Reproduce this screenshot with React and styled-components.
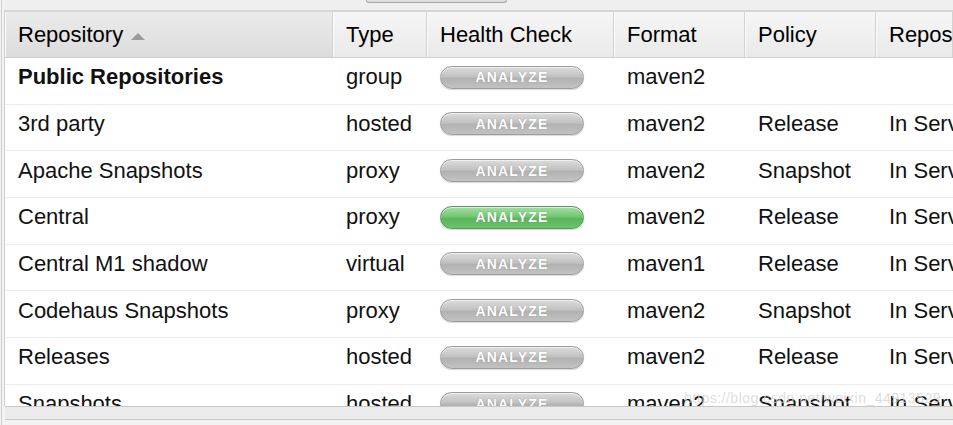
import styled, { createGlobalStyle } from 'styled-components';

const rows = [
  { name: 'Public Repositories', type: 'group', format: 'maven2', policy: '', status: '', bold: true },
  { name: '3rd party', type: 'hosted', format: 'maven2', policy: 'Release', status: 'In Service' },
  { name: 'Apache Snapshots', type: 'proxy', format: 'maven2', policy: 'Snapshot', status: 'In Service' },
  { name: 'Central', type: 'proxy', format: 'maven2', policy: 'Release', status: 'In Service', green: true },
  { name: 'Central M1 shadow', type: 'virtual', format: 'maven1', policy: 'Release', status: 'In Service' },
  { name: 'Codehaus Snapshots', type: 'proxy', format: 'maven2', policy: 'Snapshot', status: 'In Service' },
  { name: 'Releases', type: 'hosted', format: 'maven2', policy: 'Release', status: 'In Service' },
  { name: 'Snapshots', type: 'hosted', format: 'maven2', policy: 'Snapshot', status: 'In Service' },
];

const columns = '328px 94px 187px 131px 131px 1fr';

const App = () => {
  return (
    <>
      <GlobalStyle />
      <Frame>
        <Inner>
          <TopStrip>
            <Handle />
          </TopStrip>
          <Grid>
            <HeaderRow>
              <HeadCell $sorted>
                Repository
                <SortArrow />
              </HeadCell>
              <HeadCell>Type</HeadCell>
              <HeadCell>Health Check</HeadCell>
              <HeadCell>Format</HeadCell>
              <HeadCell>Policy</HeadCell>
              <HeadCell>Repository Status</HeadCell>
            </HeaderRow>
            <Body>
              {rows.map((r) => (
                <Row key={r.name}>
                  <Cell $bold={r.bold}>{r.name}</Cell>
                  <Cell>{r.type}</Cell>
                  <Cell>
                    <AnalyzeButton $green={r.green}>ANALYZE</AnalyzeButton>
                  </Cell>
                  <Cell>{r.format}</Cell>
                  <Cell>{r.policy}</Cell>
                  <Cell>{r.status}</Cell>
                </Row>
              ))}
              <Watermark>https://blog.csdn.net/weixin_44913529</Watermark>
            </Body>
          </Grid>
          <BottomBar />
        </Inner>
      </Frame>
    </>
  );
};

export default App;

const GlobalStyle = createGlobalStyle`
  html, body {
    margin: 0;
    padding: 0;
    background: #ffffff;
    overflow: hidden;
  }
  body {
    font-family: "Liberation Sans", Arial, sans-serif;
  }
`;

const Frame = styled.div`
  width: 953px;
  height: 425px;
  box-sizing: border-box;
  padding-left: 1px;
  background: #f3f3f3;
  overflow: hidden;
`;

const Inner = styled.div`
  height: 100%;
  box-sizing: border-box;
  border-left: 1px solid #cfcfcf;
  padding-left: 2px;
  display: flex;
  flex-direction: column;
`;

const TopStrip = styled.div`
  height: 10px;
  flex: none;
  background: #efefef;
  border-bottom: 2px solid #d6d6d6;
  padding-left: 362px;
`;

const Handle = styled.div`
  width: 141px;
  height: 3px;
  box-sizing: border-box;
  border: 1px solid #a8a8a8;
  border-top: none;
  border-radius: 0 0 6px 6px;
  background: linear-gradient(#e8e8e8, #d8d8d8);
`;

const Grid = styled.div`
  flex: none;
  height: 394px;
  display: flex;
  flex-direction: column;
  border-left: 1px solid #cfcfcf;
  background: #ffffff;
  overflow: hidden;
`;

const HeaderRow = styled.div`
  flex: none;
  display: grid;
  grid-template-columns: ${columns};
  height: 45px;
  border-bottom: 1px solid #d0d0d0;
  background: linear-gradient(#f6f6f6, #e9e9e9);
`;

const HeadCell = styled.div`
  display: flex;
  align-items: center;
  gap: 8px;
  padding-left: 13px;
  padding-top: 1px;
  font-size: 22px;
  color: #000;
  white-space: nowrap;
  overflow: hidden;
  border-right: 1px solid #d2d2d2;
  box-shadow: inset 1px 0 0 #fbfbfb;
  background: ${(p) => (p.$sorted ? 'linear-gradient(#ebebeb, #dcdcdc)' : 'transparent')};
`;

const SortArrow = styled.span`
  width: 0;
  height: 0;
  margin-top: 2px;
  border-left: 7px solid transparent;
  border-right: 7px solid transparent;
  border-bottom: 7px solid #9a9a9a;
`;

const Body = styled.div`
  position: relative;
  flex: 1;
  overflow: hidden;
`;

const Row = styled.div`
  display: grid;
  grid-template-columns: ${columns};
  height: 46.67px;
  box-sizing: border-box;
  border-bottom: 1px solid #ececec;
`;

const Cell = styled.div`
  display: flex;
  align-items: center;
  padding-left: 13px;
  padding-bottom: 7px;
  font-size: 22px;
  font-weight: ${(p) => (p.$bold ? 700 : 400)};
  color: #111;
  white-space: nowrap;
  overflow: hidden;
`;

const AnalyzeButton = styled.div`
  width: 144px;
  height: 23px;
  box-sizing: border-box;
  display: flex;
  align-items: center;
  justify-content: center;
  border-radius: 12px;
  border: 1px solid ${(p) => (p.$green ? '#55985a' : '#9c9c9c')};
  background: ${(p) =>
    p.$green
      ? 'linear-gradient(#a2e0a2 0%, #72c872 45%, #5cb65c 55%, #6cc26c 100%)'
      : 'linear-gradient(#dcdcdc 0%, #c2c2c2 45%, #b2b2b2 55%, #c2c2c2 100%)'};
  box-shadow: inset 0 1px 0 rgba(255, 255, 255, 0.6), 0 1px 1px rgba(0, 0, 0, 0.15);
  color: #ffffff;
  font-size: 14px;
  font-weight: 700;
  letter-spacing: 1.2px;
  text-shadow: 0 0 1px rgba(0, 0, 0, 0.3);
`;

const Watermark = styled.div`
  position: absolute;
  right: 12px;
  bottom: 0px;
  font-size: 14px;
  color: rgba(210, 210, 210, 0.75);
  letter-spacing: 0.5px;
  pointer-events: none;
`;

const BottomBar = styled.div`
  flex: none;
  height: 12px;
  border-top: 1px solid #c8c8c8;
  border-bottom: 1px solid #c8c8c8;
  background: #ececec;
  margin-left: 1px;
`;
